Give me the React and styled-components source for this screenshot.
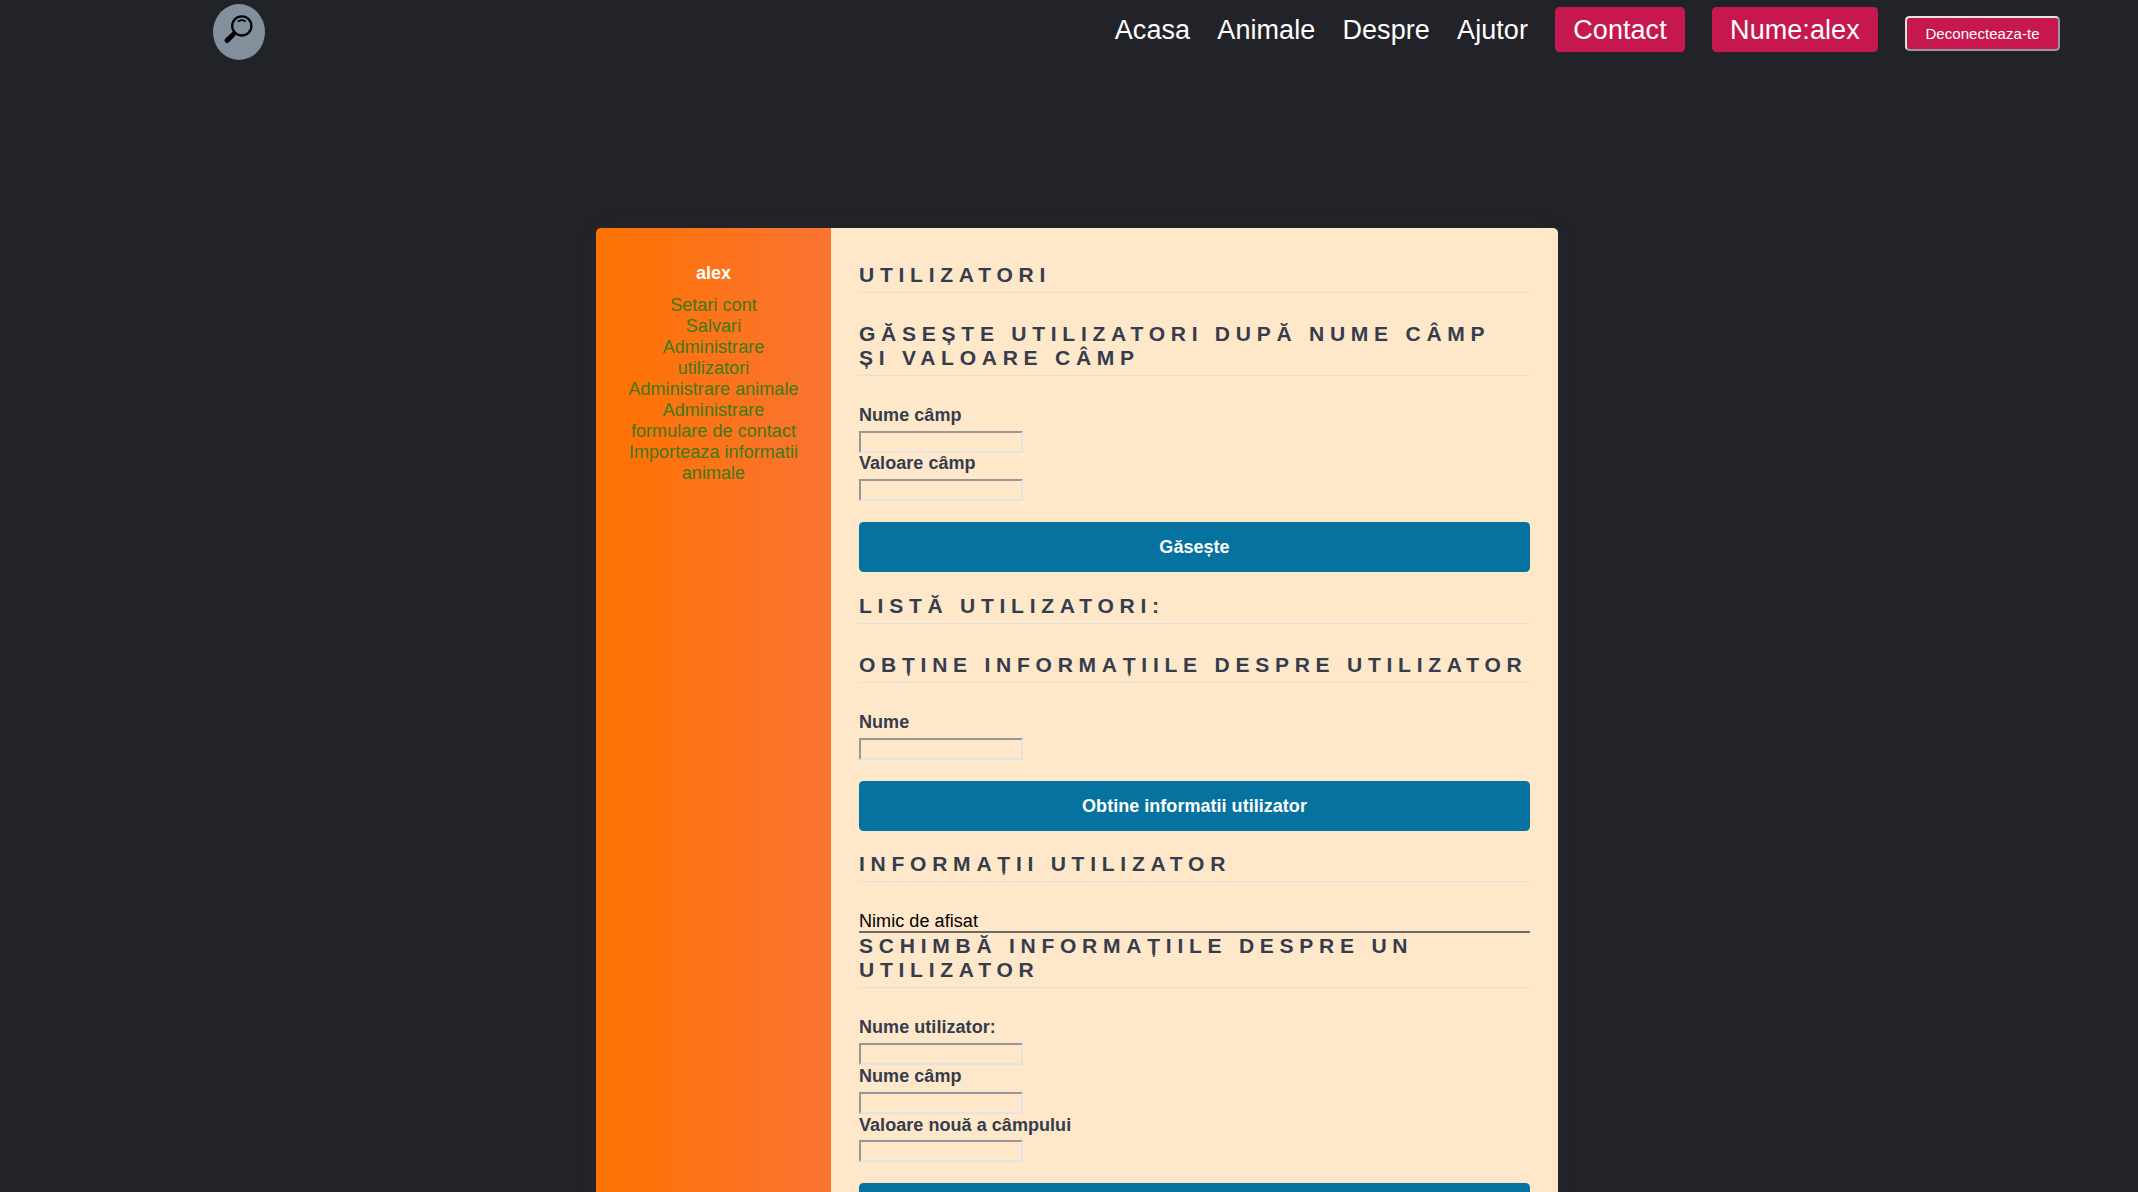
import React from "react";
import styled, { createGlobalStyle } from "styled-components";

const GlobalStyle = createGlobalStyle`
  * { box-sizing: border-box; margin: 0; padding: 0; }
  html, body { height: 100%; }
  body {
    background: #222328;
    font-family: "Liberation Sans", Arial, sans-serif;
    font-size: 18px;
    line-height: 21px;
    overflow: hidden;
  }
`;

const Page = styled.div`
  height: 1192px;
  overflow: hidden;
  display: flex;
  flex-direction: column;
`;

const Header = styled.header`
  height: 228px;
  flex: none;
  display: flex;
  justify-content: space-between;
  align-items: flex-start;
  padding: 4px 78px 0 213px;
`;

const Logo = styled.a`
  width: 52px;
  height: 56px;
  border-radius: 50%;
  background: #82909d;
  display: block;

  svg { display: block; }
`;

const Nav = styled.nav`
  display: flex;
  align-items: baseline;
  gap: 27.2px;
  padding-top: 3px;
  color: #fff;
  font-size: 27px;
  line-height: 43px;
`;

const NavLink = styled.a`
  color: #fff;
  white-space: nowrap;
  padding-top: 2px;
  letter-spacing: 0.06px;
`;

const NavBadge = styled(NavLink)`
  background: #c6184e;
  border-radius: 4.5px;
  padding: 2px 18.1px 0;
`;

const LogoutButton = styled.button`
  height: 35px;
  width: 155px;
  font: 15px/17px "Liberation Sans", Arial, sans-serif;
  letter-spacing: 0.05px;
  color: #fff;
  background: #c6184e;
  border: 2px solid;
  border-color: #e3e3e3 #979797 #979797 #e3e3e3;
  border-radius: 4.5px;
  white-space: nowrap;
`;

const Card = styled.main`
  width: 962px;
  flex: none;
  margin-left: 596px;
  display: flex;
  border-radius: 5px 5px 0 0;
  box-shadow: 0 1px 20px 0 rgba(69, 90, 100, 0.08);
`;

const Sidebar = styled.aside`
  width: 235px;
  flex: none;
  padding: 35px 31px;
  text-align: center;
  border-radius: 5px 0 0 0;
  background: linear-gradient(to right, #ff7200, #fa7433);
  letter-spacing: 0.05px;
`;

const UserName = styled.h4`
  color: #fff;
  font-size: 18px;
  margin-bottom: 11px;
`;

const SideLink = styled.a`
  display: block;
  color: #3f7a16;
`;

const Content = styled.section`
  flex: 1;
  padding: 35px 28px 0;
  background: #ffe8c9;
  border-radius: 0 5px 0 0;
`;

const Title = styled.h3`
  color: #353c4e;
  font-size: 21.06px;
  line-height: 24px;
  letter-spacing: 5.73px;
  text-transform: uppercase;
  padding-bottom: 5px;
  border-bottom: 1px solid #e0e0e0;
  margin-bottom: ${(p) => p.$gap ?? 29}px;
`;

const Form = styled.form`
  display: flex;
  flex-direction: column;
  margin-bottom: ${(p) => p.$gap ?? 21}px;
`;

const Label = styled.label`
  display: block;
  height: 25.8px;
  color: #353c4e;
  font-weight: bold;
  letter-spacing: 0.05px;
`;

const Input = styled.input`
  width: 164px;
  height: 22px;
  margin-bottom: 0.8px;
  background: transparent;
  border: 2px solid;
  border-color: #979797 #e3e3e3 #e3e3e3 #979797;
`;

const Submit = styled.button`
  height: 50px;
  margin-top: ${(p) => p.$top ?? 20}px;
  padding-top: 2px;
  border: 0;
  border-radius: 4.5px;
  background: #0672a0;
  color: #fff;
  font: bold 18px/21px "Liberation Sans", Arial, sans-serif;
  letter-spacing: 0.03px;
`;

const Result = styled.p`
  height: 22px;
  color: #000;
  letter-spacing: 0.06px;
  border-bottom: 2px solid #6a6a6a;
  margin-bottom: 1px;
`;

const FieldForm = ({ fields, action, gap, top }) => (
  <Form $gap={gap}>
    {fields.map((name) => (
      <React.Fragment key={name}>
        <Label>{name}</Label>
        <Input />
      </React.Fragment>
    ))}
    <Submit type="button" $top={top}>{action}</Submit>
  </Form>
);

const sideLinks = [
  "Setari cont",
  "Salvari",
  "Administrare utilizatori",
  "Administrare animale",
  "Administrare formulare de contact",
  "Importeaza informatii animale",
];

export default function App() {
  return (
    <Page>
      <GlobalStyle />
      <Header>
        <Logo>
          <svg width="52" height="56" viewBox="0 0 52 56" fill="none" stroke="#000" strokeLinecap="round">
            <circle cx="28.8" cy="21.9" r="9.6" strokeWidth="2.3" />
            <path d="M25.4 17.2Q28.8 14.9 32 17.2" strokeWidth="1.7" />
            <path d="M22.2 28.5L20.4 30.3" strokeWidth="2.4" />
            <path d="M14.1 36.4L20 30.7" strokeWidth="5" />
          </svg>
        </Logo>
        <Nav>
          <NavLink>Acasa</NavLink>
          <NavLink>Animale</NavLink>
          <NavLink>Despre</NavLink>
          <NavLink>Ajutor</NavLink>
          <NavBadge>Contact</NavBadge>
          <NavBadge>Nume:alex</NavBadge>
          <LogoutButton>Deconecteaza-te</LogoutButton>
        </Nav>
      </Header>
      <Card>
        <Sidebar>
          <UserName>alex</UserName>
          {sideLinks.map((link) => (
            <SideLink key={link}>{link}</SideLink>
          ))}
        </Sidebar>
        <Content>
          <Title>Utilizatori</Title>
          <Title $gap={28.8}>Găsește utilizatori după nume câmp și valoare câmp</Title>
          <FieldForm fields={["Nume câmp", "Valoare câmp"]} action="Găsește" gap={22} top={20} />
          <Title>Listă utilizatori:</Title>
          <Title>Obține informațiile despre utilizator</Title>
          <FieldForm fields={["Nume"]} action="Obtine informatii utilizator" top={20.4} />
          <Title>Informații utilizator</Title>
          <Result>Nimic de afisat</Result>
          <Title $gap={29.4}>Schimbă informațiile despre un utilizator</Title>
          <FieldForm
            fields={["Nume utilizator:", "Nume câmp", "Valoare nouă a câmpului"]}
            top={20}
          />
        </Content>
      </Card>
    </Page>
  );
}
